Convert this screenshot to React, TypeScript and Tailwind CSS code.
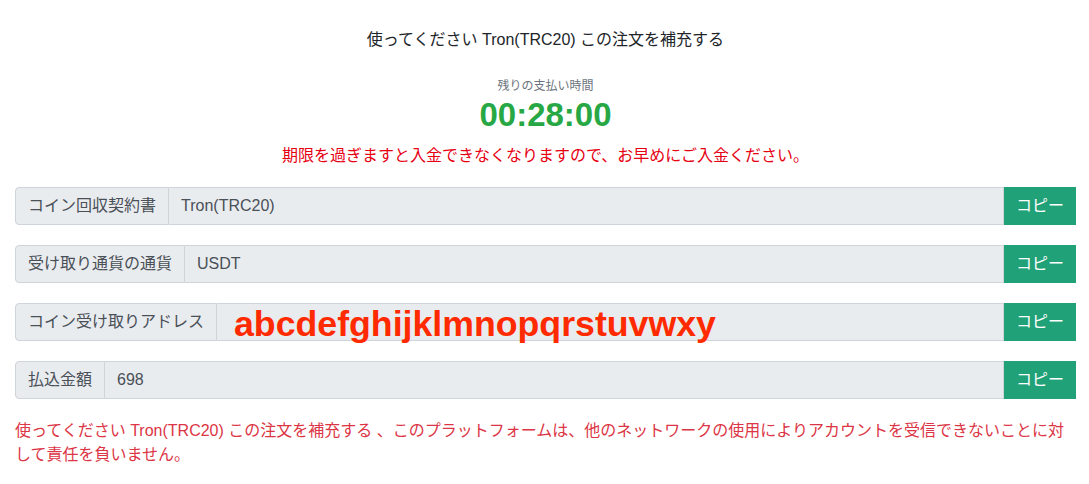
const font = '[font-family:"Liberation_Sans","Noto_Sans_CJK_JP",sans-serif]';

const rows = [
  { label: 'コイン回収契約書', value: 'Tron(TRC20)' },
  { label: '受け取り通貨の通貨', value: 'USDT' },
  { label: 'コイン受け取りアドレス', value: 'abcdefghijklmnopqrstuvwxy', big: true },
  { label: '払込金額', value: '698' },
];

function CopyRow({ label, value, big }: { label: string; value: string; big?: boolean }) {
  return (
    <div className="flex h-[38px] w-full">
      <div className="flex items-center px-3 bg-[#e9ecef] border border-[#ced4da] rounded-l-[4px] text-[16px] text-[#495057] whitespace-nowrap">
        {label}
      </div>
      <div className="flex flex-1 items-center bg-[#e9ecef] border border-l-0 border-[#ced4da]">
        {big ? (
          <span className="pl-[17px] pt-[3px] text-[35.7px] font-bold text-[#ff2a00] leading-[36px] whitespace-nowrap">{value}</span>
        ) : (
          <span className="pl-3 text-[16px] text-[#495057]">{value}</span>
        )}
      </div>
      <button className="w-[72px] bg-[#21a177] text-white text-[16px]">コピー</button>
    </div>
  );
}

export default function App() {
  return (
    <div className={`${font} w-[1089px] min-h-[484px] bg-white pl-[15px] pr-[13px] pt-[28px] text-[#212529]`}>
      <p className="text-center text-[16px] leading-6">使ってください Tron(TRC20) この注文を補充する</p>
      <p className="mt-[26px] text-center text-[12px] leading-4 text-[#6c757d]">残りの支払い時間</p>
      <p className="mt-[1px] text-center text-[33px] leading-[40px] font-bold text-[#28a745]">00:28:00</p>
      <p className="mt-[9px] text-center text-[16px] leading-6 text-[#e60012]">期限を過ぎますと入金できなくなりますので、お早めにご入金ください。</p>
      <div className="mt-[19px] flex flex-col gap-5">
        {rows.map((r) => (
          <CopyRow key={r.label} {...r} />
        ))}
      </div>
      <p className="mt-[20px] pr-[2px] text-[16px] leading-6 text-[#dc3545]">
        使ってください Tron(TRC20) この注文を補充する 、このプラットフォームは、他のネットワークの使用によりアカウントを受信できないことに対して責任を負いません。
      </p>
    </div>
  );
}
